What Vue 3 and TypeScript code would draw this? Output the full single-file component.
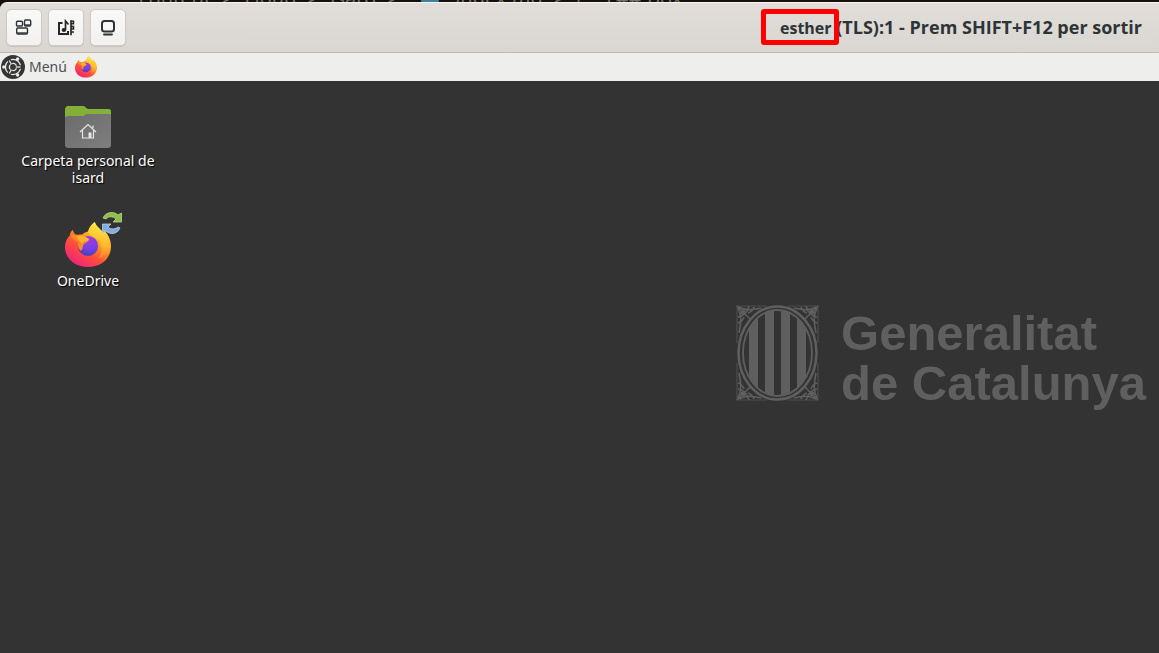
<script setup lang="ts">
interface Shortcut {
  kind: 'folder' | 'firefox'
  label: string
}

const shortcuts: Shortcut[] = [
  { kind: 'folder', label: 'Carpeta personal de isard' },
  { kind: 'firefox', label: 'OneDrive' },
]
const spokes = [0, 120, 240]
const corners = ['', 'translate(83 0) scale(-1 1)', 'translate(0 96) scale(1 -1)', 'translate(83 96) scale(-1 -1)']
</script>

<template>
  <div class="screen">
    <svg class="defs" width="0" height="0" aria-hidden="true">
      <defs>
        <linearGradient id="fire" x1="0.85" y1="0.1" x2="0.25" y2="0.95">
          <stop offset="0" stop-color="#ffe14a" />
          <stop offset="0.35" stop-color="#ffa526" />
          <stop offset="0.65" stop-color="#ff5038" />
          <stop offset="1" stop-color="#f02478" />
        </linearGradient>
        <linearGradient id="flame" x1="0.7" y1="0" x2="0.5" y2="1">
          <stop offset="0" stop-color="#fff04a" />
          <stop offset="0.6" stop-color="#ffb82b" />
          <stop offset="1" stop-color="#ff7a2c" />
        </linearGradient>
        <radialGradient id="globe" cx="0.6" cy="0.25" r="0.8">
          <stop offset="0" stop-color="#a338e0" />
          <stop offset="0.5" stop-color="#7542e5" />
          <stop offset="1" stop-color="#4a3cb0" />
        </radialGradient>
        <linearGradient id="steel" x1="0" y1="0" x2="1" y2="1">
          <stop offset="0" stop-color="#6c6c6c" />
          <stop offset="1" stop-color="#7e7e7e" />
        </linearGradient>
        <symbol id="firefox" viewBox="0 0 48 48">
          <path fill="url(#fire)" d="M8 8c1 3 2 5 4 6 2-1 4-1 6-1 2-2 4-2 6-3 1-4 3-7 7-10 2 5 5 8 8 11l1-3c5 4 8 11 8 17 0 13-10 22-24 22S0 38 0 26c0-5 2-9 5-12 0-2 1-4 3-6z" />
          <path fill="url(#flame)" d="M31 0c1 6 12 9 14 21 1 8-4 15-10 17 4-5 5-14 0-19-3-3-8-4-11-8 1-4 3-8 7-11z" />
          <circle cx="24" cy="25" r="10.500" fill="url(#globe)" />
          <path fill="#ff8a25" d="M6 14c4-2 10-1 13 2 2 1 6 1 6 2 0 3-5 4-6 6-1 3 0 5-3 6-2-3-3-6-2-9-3-2-6-3-8-7z" />
          <path fill="#ffb12c" d="M12 15c4-2 9 0 12 2l1 1c-1 2-5 2-7 4-2-1-4-3-6-7z" />
        </symbol>
      </defs>
    </svg>

    <div class="backdrop" aria-hidden="true">
      <span class="crumbs">content <b>&gt;</b> cloud <b>&gt;</b> isard <b>&gt;</b></span>
      <i></i>
      <span class="crumbs">index.md <b>&gt;</b> (**) ## Box</span>
    </div>

    <header class="titlebar">
      <div class="tools">
        <button type="button" aria-label="Monitors">
          <svg viewBox="0 0 18 18" fill="none" stroke="#303335" stroke-width="1.4">
            <rect x="1.5" y="2.2" width="6" height="4.8" rx="1" />
            <rect x="9.5" y="1" width="6.2" height="6" rx="1.2" />
            <path d="M9.5 6h6" />
            <rect x="1.7" y="9" width="10.8" height="6" rx="1.2" />
            <path d="M2 14h10" />
          </svg>
        </button>
        <button type="button" aria-label="Multimèdia">
          <svg viewBox="0 0 18 18" fill="none" stroke="#252829" stroke-width="2">
            <path d="M5.500 4H2v11h9v-3" />
            <path d="M8.500 11V2l3 3.500" stroke-width="1.700" />
            <ellipse cx="6.900" cy="11" rx="2.300" ry="2" fill="#252829" stroke="none" />
            <path d="M14 1.200v15" stroke-width="1.700" />
            <path d="M14 2.200h2.500v2.500H14M14 7.500h2.500V10H14M14 13h3" stroke-width="1.500" />
          </svg>
        </button>
        <button type="button" aria-label="Pantalla">
          <svg viewBox="0 0 18 18" fill="none" stroke="#303335" stroke-width="2">
            <rect x="3" y="2" width="12" height="10.500" rx="2.500" />
            <path d="M5 15.500h8" stroke-width="1.800" stroke-linecap="round" />
          </svg>
        </button>
      </div>
      <h1><span class="user">esther</span> (TLS):1 - Prem SHIFT+F12 per sortir</h1>
    </header>

    <nav class="panel">
      <button type="button" class="menu">
        <svg class="mate" viewBox="0 0 24 24">
          <circle cx="12" cy="12" r="12" fill="#353535" />
          <circle cx="12" cy="12" r="7.600" fill="none" stroke="#e8e8e8" stroke-width="1.400" />
          <circle cx="12" cy="12" r="3.600" fill="none" stroke="#e8e8e8" stroke-width="1.400" />
          <g v-for="a in spokes" :key="a" :transform="`rotate(${a} 12 12)`">
            <path d="M15.600 12H21" stroke="#353535" stroke-width="3.600" />
            <path d="M15.500 12H19.500" stroke="#e8e8e8" stroke-width="1.300" />
            <circle cx="2.800" cy="12" r="1.700" fill="#e8e8e8" />
          </g>
        </svg>
        <span>Menú</span>
      </button>
      <button type="button" class="launcher" aria-label="Firefox">
        <svg viewBox="0 0 48 48"><use href="#firefox" /></svg>
      </button>
    </nav>

    <main class="desktop">
      <ul class="shortcuts">
        <li v-for="s in shortcuts" :key="s.label">
          <button type="button" class="shortcut">
            <svg v-if="s.kind === 'folder'" class="folder-icon" viewBox="0 0 46 42">
              <path fill="#769c36" d="M0 5c0-3 1-5 4-5h14c2 0 3 3 5 3h20c2 0 3 1 3 3v14H0z" />
              <path fill="#85b038" d="M0 5c0-3 1-5 4-5h14c2 0 3 3 5 3h20c2 0 3 1 3 3v2H22c-2 0-2 3-5 3H0z" />
              <path fill="url(#steel)" d="M0 13c0-2 1-3 3-3h14c3 0 3-2 5-2h21c2 0 3 1 3 3v27c0 3-1 4-4 4H4c-3 0-4-1-4-4z" />
              <path fill="none" stroke="#e6e6e6" stroke-width="1.200" d="M15 26l8-7.500 8 7.500M17.500 24.500V32h11v-7.500M28 22v-2.500" />
              <path fill="#e6e6e6" d="M23.500 26.500h3V32h-3z" />
            </svg>
            <span v-else class="firefox-icon">
              <svg class="fox" viewBox="0 0 48 48"><use href="#firefox" /></svg>
              <svg class="sync" viewBox="0 0 22 22">
                <path fill="#91bd50" stroke="#b4d979" stroke-width="0.800" d="M2 6C5-1 14-.5 17 3l3.500-2v9H12l3-3C12 4 7 4 5 7z" />
                <path fill="#84aed9" stroke="#b3d0ef" stroke-width="0.800" d="M19 16C16 23 8 22.500 5 19l-3.500 2v-9H10l-3 3c3 3 8 2 10 0z" />
              </svg>
            </span>
            <span class="label">{{ s.label }}</span>
          </button>
        </li>
      </ul>

      <div class="brand">
        <svg class="crest" viewBox="0 0 83 96">
          <defs>
            <clipPath id="shield"><ellipse cx="41.500" cy="48" rx="34" ry="43" /></clipPath>
          </defs>
          <g clip-path="url(#shield)" fill="#5f5f5f">
            <path d="M13 0h9v96h-9zM29 0h9v96h-9zM45 0h9v96h-9zM61 0h9v96h-9z" />
            <path d="M38 4h7v2h-7zM38 90h7v2h-7z" />
          </g>
          <ellipse cx="41.500" cy="48" rx="39" ry="46.500" fill="none" stroke="#5f5f5f" stroke-width="2.500" />
          <ellipse cx="41.500" cy="48" rx="34.500" ry="43" fill="none" stroke="#5f5f5f" stroke-width="1.800" />
          <g v-for="c in corners" :key="c" :transform="c" fill="none" stroke="#5f5f5f">
            <path d="M1 38V1h30" stroke-width="1.200" stroke-opacity="0.600" />
            <path d="M1 1l13 13M3 2c7 4 13 3 22 1M2 3c4 7 3 14 1 25M2 12c6-1 9-4 11-11M2 18c3-1 5-3 6-6M18 2c-1 3-3 5-6 6" stroke-width="1.600" />
            <circle cx="7" cy="7" r="2.500" fill="#5f5f5f" stroke="none" />
          </g>
        </svg>
        <p>Generalitat<br />de Catalunya</p>
      </div>
    </main>
  </div>
</template>

<style>
body {
  margin: 0;
  background: #333333;
}
</style>

<style scoped>
.screen {
  display: flex;
  flex-direction: column;
  min-height: 100vh;
  background: #333333;
  font-family: "Noto Sans", "Open Sans", sans-serif;
}

.defs {
  position: absolute;
}

button {
  margin: 0;
  padding: 0;
  border: 0;
  background: none;
  color: inherit;
  font: inherit;
}

.backdrop {
  display: flex;
  align-items: flex-end;
  gap: 16px;
  height: 8px;
  margin-bottom: -6px;
  padding-left: 139px;
  overflow: hidden;
  background: #15100e;
  color: #77716b;
  font-size: 20px;
  line-height: 20px;
  white-space: nowrap;
}

.crumbs b {
  margin: 0 6px;
  font-weight: 400;
}

.backdrop i {
  width: 18px;
  height: 8px;
  border-radius: 0 0 9px 9px;
  background: #3e81a0;
}

.titlebar {
  position: relative;
  display: flex;
  align-items: center;
  justify-content: space-between;
  box-sizing: border-box;
  height: 51px;
  padding: 0 17px 0 6px;
  border-top: 1px solid #f5f4f2;
  border-bottom: 1px solid #bfb8b1;
  border-radius: 7px 0 0 0;
  background: linear-gradient(#e1deda, #dad6d2);
  color: #2e3436;
}

.tools {
  display: flex;
  gap: 6px;
}

.tools button {
  display: grid;
  place-items: center;
  box-sizing: border-box;
  width: 36px;
  height: 37px;
  border: 1px solid #cfc9c4;
  border-radius: 5px;
  background: linear-gradient(#f9f9f8, #f2f1f0);
  box-shadow: 0 1px 1px #c9c4bf;
}

.tools svg {
  width: 18px;
  height: 18px;
}

h1 {
  margin: 0;
  font-family: "Open Sans", "Noto Sans", sans-serif;
  font-size: 18px;
  font-weight: 700;
  line-height: 24px;
  white-space: nowrap;
}

.user {
  position: relative;
  font-size: 16px;
}

.user::after {
  content: "";
  position: absolute;
  inset: -8px -7px -6px -19px;
  border: 5px solid #ff0000;
  border-radius: 3px;
}

.panel {
  display: flex;
  align-items: center;
  gap: 8px;
  height: 28px;
  padding-left: 1px;
  background: #eeeeed;
  color: #505050;
}

.menu {
  display: flex;
  align-items: center;
  gap: 4px;
  font-size: 14px;
  line-height: 24px;
}

.mate {
  width: 24px;
  height: 24px;
}

.launcher,
.launcher svg {
  display: block;
  width: 22px;
  height: 22px;
}

.desktop {
  display: flex;
  flex: 1;
  align-items: flex-start;
  justify-content: space-between;
  padding: 25px 13px 0 16px;
}

.shortcuts {
  display: flex;
  flex-direction: column;
  gap: 25px;
  width: 144px;
  margin: 0;
  padding: 0;
  list-style: none;
}

.shortcut {
  display: flex;
  flex-direction: column;
  align-items: center;
  gap: 4px;
  width: 100%;
  color: #ffffff;
  font-size: 14px;
  line-height: 17px;
  text-shadow: 1px 1px 1px #000000;
}

.folder-icon {
  width: 46px;
  height: 42px;
}

.firefox-icon {
  position: relative;
  display: flex;
  align-items: flex-end;
  width: 46px;
  height: 57px;
}

.fox {
  width: 46px;
  height: 46px;
}

.sync {
  position: absolute;
  top: 0;
  right: -12px;
  width: 22px;
  height: 24px;
}

.brand {
  display: flex;
  align-items: flex-start;
  gap: 22px;
  margin-top: 199px;
  color: #5f5f5f;
}

.crest {
  width: 83px;
  height: 96px;
}

.brand p {
  margin: 0;
  padding-top: 3px;
  font: 700 49px/50px "Liberation Sans", Arial, sans-serif;
  white-space: nowrap;
}
</style>
